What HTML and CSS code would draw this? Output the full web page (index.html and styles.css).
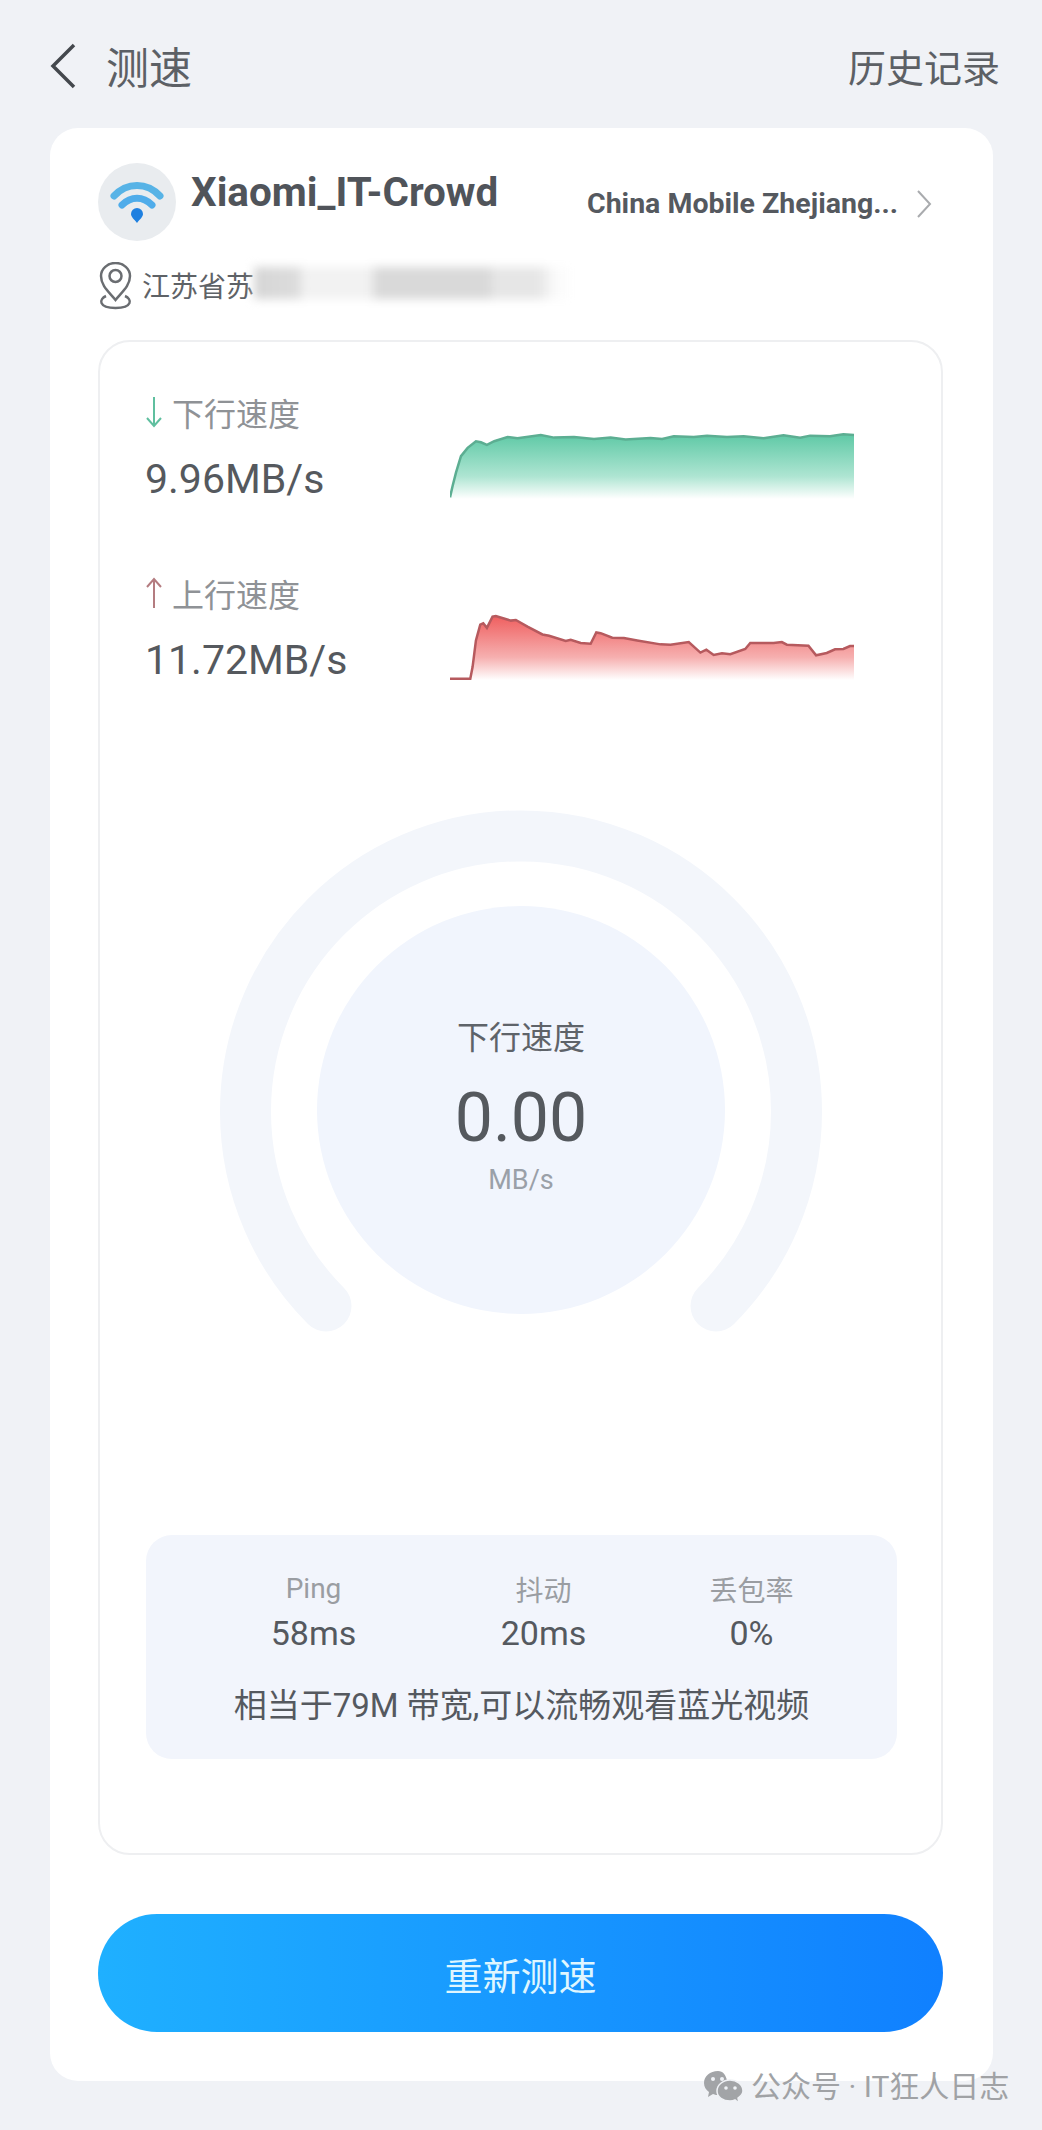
FILE: index.html
```html
<!DOCTYPE html>
<html>
<head>
  <title>测速</title>
  <link rel="stylesheet" href="styles.css">
</head>
<body>
  <!-- 顶部标题 -->
  <header class="top-bar">
    <div class="top-left">
      <svg class="back-icon" viewBox="0 0 26 46"><path d="M24 2 L3 23 L24 44"/></svg>
      <span class="top-title">测速</span>
    </div>
    <span class="top-link">历史记录</span>
  </header>

  <main class="card">
    <div class="net-row">
      <div class="wifi-badge">
        <svg viewBox="0 0 78 78">
          <path class="wifi-a" d="M16 33 C29 19 49 19 62 33"/>
          <path class="wifi-b" d="M24 42 C33 33 45 33 54 42"/>
          <path class="wifi-c" d="M39 60 C36 56 33 54 33 51 A6 6 0 0 1 45 51 C45 54 42 56 39 60 Z"/>
        </svg>
      </div>
      <div class="net-name">Xiaomi_IT-Crowd</div>
      <div class="net-isp">
        <span>China Mobile Zhejiang...</span>
        <svg class="isp-arrow" viewBox="0 0 16 28"><path d="M2 1 L14 14 L2 27"/></svg>
      </div>
    </div>

    <div class="loc-row">
      <svg class="pin-icon" viewBox="0 0 35 48">
        <path d="M17.5 38 C11 30 3 24 3 14 A14.5 13 0 0 1 32 14 C32 24 24 30 17.5 38 Z"/>
        <circle cx="17.5" cy="14" r="6"/>
        <path d="M8 34 C1 37 0 46 17.5 46 C35 46 34 37 27 34"/>
      </svg>
      <span class="loc-text">江苏省苏</span>
      <div class="loc-blur"></div>
    </div>

    <section class="result-box">
      <div class="speed-row">
        <div class="speed-info">
          <div class="speed-label">
            <svg class="arrow arrow-down" viewBox="0 0 18 32"><path d="M9 1 V30 M2 22 L9 30 L16 22"/></svg>
            下行速度
          </div>
          <div class="speed-value">9.96MB/s</div>
        </div>
        <svg class="chart" viewBox="57 40 1215 200" preserveAspectRatio="none">
          <defs>
            <linearGradient id="fill-green" x1="0" y1="0" x2="0" y2="1">
              <stop offset="0" stop-color="#5fc9a6"/>
              <stop offset="0.65" stop-color="#aee5d2"/>
              <stop offset="1" stop-color="#ffffff"/>
            </linearGradient>
            <linearGradient id="fill-red" x1="0" y1="0" x2="0" y2="1">
              <stop offset="0" stop-color="#ef5f5f"/>
              <stop offset="0.65" stop-color="#f6b0b0"/>
              <stop offset="1" stop-color="#ffffff"/>
            </linearGradient>
          </defs>
          <path fill="url(#fill-green)" d="M57 235 L65 200 L75 160 L90 110 L110 85 L135 65 L150 68 L168 76 L190 65 L230 52 L260 56 L330 46 L370 54 L430 52 L490 58 L540 54 L585 60 L660 55 L695 58 L730 50 L790 52 L830 48 L890 52 L940 50 L1000 56 L1060 47 L1110 54 L1140 48 L1200 50 L1220 47 L1240 44 L1272 46 L1272 240 L57 240 Z"/>
          <path class="line-green" d="M57 235 L65 200 L75 160 L90 110 L110 85 L135 65 L150 68 L168 76 L190 65 L230 52 L260 56 L330 46 L370 54 L430 52 L490 58 L540 54 L585 60 L660 55 L695 58 L730 50 L790 52 L830 48 L890 52 L940 50 L1000 56 L1060 47 L1110 54 L1140 48 L1200 50 L1220 47 L1240 44 L1272 46"/>
        </svg>
      </div>

      <div class="speed-row">
        <div class="speed-info">
          <div class="speed-label">
            <svg class="arrow arrow-up" viewBox="0 0 18 32"><path d="M9 31 V2 M2 10 L9 2 L16 10"/></svg>
            上行速度
          </div>
          <div class="speed-value">11.72MB/s</div>
        </div>
        <svg class="chart chart-up" viewBox="57 580 1215 200" preserveAspectRatio="none">
          <path fill="url(#fill-red)" d="M118 776 L125 740 L135 660 L148 612 L157 608 L168 622 L185 588 L195 586 L240 600 L255 598 L290 618 L335 642 L355 646 L405 662 L420 658 L450 668 L480 670 L497 636 L510 638 L545 652 L580 653 L620 660 L690 672 L720 673 L775 665 L810 697 L828 688 L850 704 L875 699 L900 702 L945 686 L960 668 L1030 668 L1055 665 L1070 673 L1135 676 L1158 705 L1190 698 L1215 687 L1240 686 L1260 677 L1272 677 L1272 780 L118 780 Z"/>
          <path class="line-red" d="M57 776 L118 776 L125 740 L135 660 L148 612 L157 608 L168 622 L185 588 L195 586 L240 600 L255 598 L290 618 L335 642 L355 646 L405 662 L420 658 L450 668 L480 670 L497 636 L510 638 L545 652 L580 653 L620 660 L690 672 L720 673 L775 665 L810 697 L828 688 L850 704 L875 699 L900 702 L945 686 L960 668 L1030 668 L1055 665 L1070 673 L1135 676 L1158 705 L1190 698 L1215 687 L1240 686 L1260 677 L1272 677"/>
        </svg>
      </div>

      <!-- 仪表盘 -->
      <div class="gauge">
        <svg class="gauge-ring" viewBox="0 0 602 602">
          <path d="M106 497 A275.5 275.5 0 1 1 496 497"/>
        </svg>
        <div class="gauge-center">
          <div class="gauge-label">下行速度</div>
          <div class="gauge-num">0.00</div>
          <div class="gauge-unit">MB/s</div>
        </div>
      </div>

      <div class="stats">
        <div class="stats-grid">
          <div class="stat-item stat-ping">
            <div class="stat-name">Ping</div>
            <div class="stat-val">58ms</div>
          </div>
          <div class="stat-item stat-jitter">
            <div class="stat-name stat-name-cjk">抖动</div>
            <div class="stat-val">20ms</div>
          </div>
          <div class="stat-item stat-loss">
            <div class="stat-name stat-name-cjk">丢包率</div>
            <div class="stat-val">0%</div>
          </div>
        </div>
        <div class="stats-note">相当于79M 带宽,可以流畅观看蓝光视频</div>
      </div>
    </section>

    <button class="retest">重新测速</button>
  </main>

  <div class="watermark">
    <svg class="wechat-icon" viewBox="0 0 40 32">
      <path class="wx-back" d="M15 0 C7 0 1 5 1 12 C1 16 3 19 6 21 L5 26 L10 23 C12 24 14 24 16 24 L24 10 C23 4 20 0 15 0 Z"/>
      <path class="wx-front" d="M27 9 C20 9 14 14 14 20 C14 26 20 30 27 30 C29 30 30 30 32 29 L36 32 L35 27 C38 25 40 23 40 20 C40 14 34 9 27 9 Z"/>
      <circle class="wx-eye" cx="10" cy="8" r="2"/>
      <circle class="wx-eye" cx="19" cy="8" r="2"/>
      <circle class="wx-eye" cx="23" cy="17" r="1.8"/>
      <circle class="wx-eye" cx="32" cy="17" r="1.8"/>
    </svg>
    <span>公众号 · IT狂人日志</span>
  </div>
</body>
</html>
```

FILE: styles.css
```css
/* 全体 */
body {
  margin: 0;
  width: 1042px;
  height: 2130px;
  position: relative;
  overflow: hidden;
  background-color: #f0f2f6;
  color: #555a60;
  font-family: Roboto, "Noto Sans CJK SC", sans-serif;
}

/* 顶部标题 */
.top-bar {
  height: 128px;
  box-sizing: border-box;
  padding: 10px 42px 0 50px;
  display: flex;
  justify-content: space-between;
  align-items: center;
}

.top-left {
  display: flex;
  align-items: center;
  gap: 30px;
}

.back-icon {
  width: 26px;
  height: 46px;
  margin-top: -6px;
  fill: none;
  stroke: #44484d;
  stroke-width: 3.5;
}

.top-title {
  font-size: 43px;
  line-height: 60px;
  color: #5c6065;
}

.top-link {
  font-size: 38px;
  line-height: 60px;
  color: #5c6065;
}

/* 卡片 */
.card {
  width: 943px;
  height: 1953px;
  box-sizing: border-box;
  margin-left: 50px;
  padding: 35px 48px 0;
  background-color: #fff;
  border-radius: 28px;
}

.net-row {
  display: flex;
  align-items: flex-start;
  height: 78px;
}

.wifi-badge {
  width: 78px;
  height: 78px;
  border-radius: 50%;
  background-color: #e9ecef;
}

.wifi-badge svg {
  display: block;
  width: 78px;
  height: 78px;
}

.wifi-a,
.wifi-b {
  fill: none;
  stroke-width: 7;
  stroke-linecap: round;
}

.wifi-a {
  stroke: #57b3e6;
}

.wifi-b {
  stroke: #4facea;
}

.wifi-c {
  fill: #1f80e0;
}

.net-name {
  margin-left: 15px;
  margin-top: 7px;
  font-size: 40.4px;
  line-height: 46px;
  font-weight: 700;
  color: #50545a;
}

.net-isp {
  margin-left: auto;
  margin-right: 13px;
  margin-top: 23px;
  display: flex;
  align-items: center;
  gap: 18px;
  font-size: 28.5px;
  line-height: 36px;
  font-weight: 700;
  color: #55595f;
}

.isp-arrow {
  width: 16px;
  height: 28px;
  fill: none;
  stroke: #a9abae;
  stroke-width: 2;
}

.loc-row {
  display: flex;
  align-items: center;
  height: 48px;
  margin-top: 21px;
}

.pin-icon {
  width: 35px;
  height: 48px;
  fill: none;
  stroke: #6a6d71;
  stroke-width: 2.5;
}

.loc-text {
  margin-left: 9px;
  margin-top: 3px;
  font-size: 28px;
  line-height: 40px;
  color: #5e6266;
}

.loc-blur {
  width: 320px;
  height: 32px;
  margin-top: -6px;
  filter: blur(5px);
  background: linear-gradient(90deg, #d6d6d6 0, #dcdcdc 44px, #f2f2f2 50px, #f2f2f2 116px, #d9d9d9 122px, #d9d9d9 235px, #e6e6e6 240px, #e6e6e6 285px, #fafafa 300px, #fff 320px);
}

/* 结果框 */
.result-box {
  width: 845px;
  height: 1515px;
  box-sizing: border-box;
  margin-top: 30px;
  padding: 50px 45px 0;
  border: 2px solid #eeeff1;
  border-radius: 32px;
}

.speed-row {
  display: flex;
  height: 125px;
  margin-bottom: 56px;
}

.speed-info {
  width: 305px;
}

.speed-label {
  display: flex;
  align-items: center;
  gap: 9px;
  height: 40px;
  font-size: 32px;
  color: #8f9296;
}

.arrow {
  width: 18px;
  height: 32px;
  fill: none;
  stroke-width: 2;
}

.arrow-down {
  stroke: #5fbf9f;
}

.arrow-up {
  stroke: #b47c80;
}

.speed-value {
  margin-top: 24px;
  font-size: 41px;
  line-height: 46px;
  color: #55595e;
}

.chart {
  width: 404px;
  height: 66px;
  margin-top: 41px;
}

.line-green,
.line-red {
  fill: none;
  stroke-width: 2.5;
  vector-effect: non-scaling-stroke;
}

.line-green {
  stroke: #5cae92;
}

.line-red {
  stroke: #b65a5e;
}

/* 仪表盘 */
.gauge {
  width: 602px;
  height: 602px;
  margin: 111px 0 0 75px;
  display: grid;
  place-items: center;
}

.gauge-ring {
  grid-area: 1 / 1;
  width: 602px;
  height: 602px;
  fill: none;
  stroke: #f3f6fb;
  stroke-width: 51;
  stroke-linecap: round;
}

.gauge-center {
  grid-area: 1 / 1;
  z-index: 1;
  width: 408px;
  height: 408px;
  border-radius: 50%;
  background-color: #f1f5fd;
  display: flex;
  flex-direction: column;
  align-items: center;
}

.gauge-label {
  margin-top: 110px;
  font-size: 32px;
  line-height: 44px;
  color: #5e6369;
}

.gauge-num {
  margin-top: 20px;
  font-size: 68px;
  line-height: 76px;
  color: #55595e;
}

.gauge-unit {
  margin-top: 6px;
  font-size: 27px;
  line-height: 36px;
  color: #9aa0a8;
}

/* 统计 */
.stats {
  height: 224px;
  box-sizing: border-box;
  margin: 124px 0 0 1px;
  width: 751px;
  padding-top: 36px;
  background-color: #f2f5fc;
  border-radius: 26px;
}

.stats-grid {
  display: flex;
  height: 86px;
}

.stat-item {
  text-align: center;
}

.stat-ping {
  width: 335px;
}

.stat-jitter {
  width: 125px;
}

.stat-loss {
  width: 291px;
}

.stat-name {
  font-size: 28px;
  line-height: 36px;
  color: #9a9da2;
}

.stat-name-cjk {
  margin: 3px 0 -3px;
}

.stat-val {
  margin-top: 6px;
  font-size: 34px;
  line-height: 40px;
  color: #55595f;
}

.stats-note {
  margin-top: 29px;
  text-align: center;
  font-size: 33px;
  line-height: 40px;
  color: #55595f;
}

/* 按钮 */
.retest {
  display: block;
  width: 845px;
  height: 118px;
  margin-top: 59px;
  border: 0;
  border-radius: 59px;
  background: linear-gradient(90deg, #1fb0ff, #1080ff);
  color: #dff6ff;
  font-family: inherit;
  font-size: 38px;
}

/* 水印 */
.watermark {
  position: absolute;
  left: 703px;
  top: 2069px;
  display: flex;
  align-items: center;
  gap: 8px;
  font-size: 30px;
  line-height: 36px;
  color: #a0a2a5;
}

.wechat-icon {
  width: 40px;
  height: 32px;
}

.wx-back {
  fill: #a2a4a7;
}

.wx-front {
  fill: #a2a4a7;
  stroke: #f0f2f6;
  stroke-width: 1.5;
}

.wx-eye {
  fill: #f0f2f6;
}
```
